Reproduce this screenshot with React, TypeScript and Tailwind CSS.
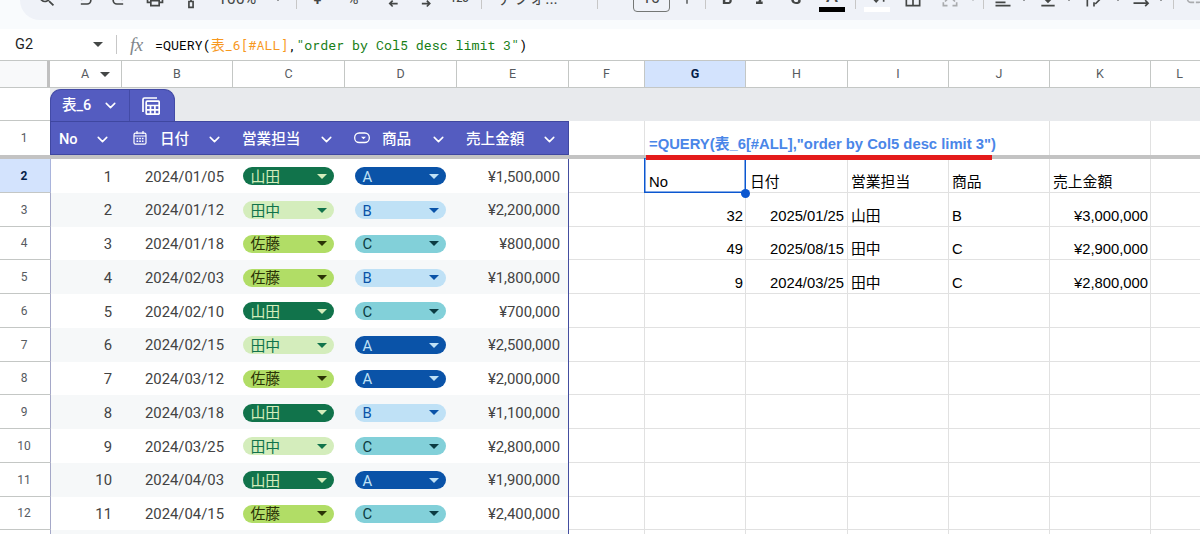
import type { ReactNode } from 'react'
import { clsx } from 'clsx'
import { ChevronDown } from 'lucide-react'
import {
    MdSearch,
    MdOutlinePrint,
    MdFormatBold,
    MdFormatItalic,
    MdStrikethroughS,
    MdBorderAll,
    MdFormatAlignLeft,
    MdVerticalAlignBottom,
    MdArrowDropDown,
    MdAdd,
    MdLink,
} from 'react-icons/md'

interface SalesRow {
    no: number
    date: string
    staff: string
    item: string
    amount: string
}

const SALES: SalesRow[] = [
    { no: 1, date: '2024/01/05', staff: '山田', item: 'A', amount: '¥1,500,000' },
    { no: 2, date: '2024/01/12', staff: '田中', item: 'B', amount: '¥2,200,000' },
    { no: 3, date: '2024/01/18', staff: '佐藤', item: 'C', amount: '¥800,000' },
    { no: 4, date: '2024/02/03', staff: '佐藤', item: 'B', amount: '¥1,800,000' },
    { no: 5, date: '2024/02/10', staff: '山田', item: 'C', amount: '¥700,000' },
    { no: 6, date: '2024/02/15', staff: '田中', item: 'A', amount: '¥2,500,000' },
    { no: 7, date: '2024/03/12', staff: '佐藤', item: 'A', amount: '¥2,000,000' },
    { no: 8, date: '2024/03/18', staff: '山田', item: 'B', amount: '¥1,100,000' },
    { no: 9, date: '2024/03/25', staff: '田中', item: 'C', amount: '¥2,800,000' },
    { no: 10, date: '2024/04/03', staff: '山田', item: 'A', amount: '¥1,900,000' },
    { no: 11, date: '2024/04/15', staff: '佐藤', item: 'C', amount: '¥2,400,000' },
]

// Query output, G2:K5
const RESULTS: string[][] = [
    ['No', '日付', '営業担当', '商品', '売上金額'],
    ['32', '2025/01/25', '山田', 'B', '¥3,000,000'],
    ['49', '2025/08/15', '田中', 'C', '¥2,900,000'],
    ['9', '2024/03/25', '田中', 'C', '¥2,800,000'],
]

const COLUMNS = [
    { name: 'A', width: 'w-[72px]' },
    { name: 'B', width: 'w-[111px]' },
    { name: 'C', width: 'w-[112px]' },
    { name: 'D', width: 'w-[112px]' },
    { name: 'E', width: 'w-[112px]' },
    { name: 'F', width: 'w-[76px]' },
    { name: 'G', width: 'w-[101px]' },
    { name: 'H', width: 'w-[102px]' },
    { name: 'I', width: 'w-[101px]' },
    { name: 'J', width: 'w-[101px]' },
    { name: 'K', width: 'w-[101px]' },
    { name: 'L', width: 'w-[58px]' },
]

const CHIP_COLORS: Record<string, string> = {
    山田: 'bg-[#11734b] text-[#d4edbc]',
    田中: 'bg-[#d4edbc] text-[#11734b]',
    佐藤: 'bg-[#b1dd66] text-[#2b3306]',
    A: 'bg-[#0a53a8] text-[#bfe1f6]',
    B: 'bg-[#bfe1f6] text-[#0a53a8]',
    C: 'bg-[#82d0d9] text-[#0b3b42]',
}

const ROBOTO = "font-[Roboto,'Noto_Sans_CJK_JP',sans-serif]"
const ARIAL = "font-['Liberation_Sans','Noto_Sans_CJK_JP',sans-serif]"

function Caret({ className }: { className?: string }) {
    return (
        <svg viewBox="0 0 10 5" className={clsx('h-[5px] w-[10px] shrink-0 fill-current', className)}>
            <path d="M0 0h10L5 5z" />
        </svg>
    )
}

function Chip({ value }: { value: string }) {
    return (
        <div className={clsx('flex h-[18px] w-[91px] items-center justify-between rounded-full pl-[7.5px] pr-[7px] leading-none', CHIP_COLORS[value])}>
            <span className="pt-[2px]">{value}</span>
            <Caret />
        </div>
    )
}

function Tool({ width, children }: { width: string; children?: ReactNode }) {
    return <div className={clsx('flex h-full shrink-0 items-center justify-center', width)}>{children}</div>
}

function ToolIcon({ path, className }: { path: string; className?: string }) {
    return (
        <svg viewBox="0 0 24 24" className={clsx('size-5 shrink-0', className)} fill="none" stroke="currentColor" strokeWidth="2">
            <path d={path} />
        </svg>
    )
}

function Divider({ width }: { width: string }) {
    return (
        <Tool width={width}>
            <div className="h-5 w-px bg-[#c7c7c7]" />
        </Tool>
    )
}

function Toolbar() {
    return (
        <div className="h-[29px] shrink-0 bg-[#f9fbfd] pl-5">
            <div className="h-5 overflow-hidden rounded-bl-[20px] bg-[#eff2f8]">
                <div className={clsx('-mt-[21px] flex h-10 items-center pl-[8px] text-[20px] text-[#444746]', ROBOTO)}>
                    <Tool width="w-[38px]"><MdSearch /></Tool>
                    <Tool width="w-[38px]"><ToolIcon path="M7 18h7.500a4.500 4.500 0 0 0 0-9H5M9 5L5 9l4 4" /></Tool>
                    <Tool width="w-[29px]"><ToolIcon path="M17 18H9.500a4.500 4.500 0 0 1 0-9H19M15 5l4 4-4 4" /></Tool>
                    <Tool width="w-[43px]"><MdOutlinePrint /></Tool>
                    <Tool width="w-[29px]"><ToolIcon path="M5 3h13v5H5zM18 5h3v6h-9v4M9.500 15h5v7h-5z" /></Tool>
                    <Tool width="w-[64px]"><span className="text-[16px]">100%</span></Tool>
                    <Tool width="w-[18px]"><MdArrowDropDown className="size-4" /></Tool>
                    <Divider width="w-[19px]" />
                    <Tool width="w-[23px]"><span className="text-[16px] font-medium">¥</span></Tool>
                    <Tool width="w-[48px]"><span className="text-[15px]">%</span></Tool>
                    <Tool width="w-[27px]"><ToolIcon path="M3 11h2M8 4h4v8H8zM20 17.500h-9M14 14l-3.500 3.500 3.500 3.500" /></Tool>
                    <Tool width="w-[43px]"><ToolIcon path="M3 11h2M8 4h4v8H8zM15 4h4v8h-4zM7 17.500h9M13 14l3.500 3.500-3.500 3.500" /></Tool>
                    <Tool width="w-[25px]"><span className="text-[11px] font-medium">123</span></Tool>
                    <Divider width="w-[18px]" />
                    <Tool width="w-[75px]"><span className="text-[16px] whitespace-nowrap">デフォ...</span></Tool>
                    <Divider width="w-[65px]" />
                    <Tool width="w-[42px]">
                        <div className="mt-px flex h-[25px] w-[37px] items-center justify-center rounded-[4px] border border-[#747775] text-[16px]">
                            <span className="-mt-[4px]">10</span>
                        </div>
                    </Tool>
                    <Tool width="w-[29px]"><MdAdd className="size-4" /></Tool>
                    <Divider width="w-[9px]" />
                    <Tool width="w-[33px]"><MdFormatBold /></Tool>
                    <Tool width="w-[35px]"><MdFormatItalic /></Tool>
                    <Tool width="w-[36px]"><MdStrikethroughS /></Tool>
                    <Tool width="w-[36px]">
                        <div className="flex flex-col items-center pt-px">
                            <span className="text-[18px] leading-[18px] font-medium">A</span>
                            <div className="mt-[2px] h-[5px] w-[26px] bg-black" />
                        </div>
                    </Tool>
                    <Divider width="w-[10px]" />
                    <Tool width="w-[33px]">
                        <div className="flex flex-col items-center pt-px">
                            <ToolIcon className="-mt-[1px]" path="M5 12l7-7 6 6-7 8zM20 16v3" />
                            <div className="mt-[1px] h-[5px] w-[26px] bg-white" />
                        </div>
                    </Tool>
                    <Tool width="w-[40px]"><MdBorderAll /></Tool>
                    <Tool width="w-[34px]">
                        <ToolIcon className="text-[#a9abae]" path="M4 8V4h5M15 4h5v4M4 16v4h5M15 20h5v-4M2 12h6M16 12h6M6 15l3-3M18 15l-3-3" />
                    </Tool>
                    <Tool width="w-[12px]"><MdArrowDropDown className="size-4 shrink-0 text-[#a9abae]" /></Tool>
                    <Divider width="w-[8px]" />
                    <Tool width="w-[31px]"><MdFormatAlignLeft /></Tool>
                    <Tool width="w-[12px]"><MdArrowDropDown className="size-4 shrink-0" /></Tool>
                    <Tool width="w-[35px]"><MdVerticalAlignBottom /></Tool>
                    <Tool width="w-[8px]"><MdArrowDropDown className="size-4 shrink-0" /></Tool>
                    <Tool width="w-[41px]"><ToolIcon path="M4 3v18M12 3v4M12 16v5M7 12h12M16 9l3.500 3-6 6" /></Tool>
                    <Tool width="w-[8px]"><MdArrowDropDown className="size-4 shrink-0" /></Tool>
                    <Tool width="w-[37px]"><ToolIcon path="M6 11l5-9 5 9M3 17h17M17 13.500l3.500 3.500-3.500 3.500" /></Tool>
                    <Tool width="w-[4px]"><MdArrowDropDown className="size-4 shrink-0" /></Tool>
                    <Divider width="w-[20px]" />
                    <Tool width="w-[24px]"><MdLink className="text-[#a9abae]" /></Tool>
                </div>
            </div>
        </div>
    )
}

function FormulaBar() {
    return (
        <div className="flex h-[32px] shrink-0 items-center border-b border-[#c4c7c5] bg-white">
            <div className={clsx('flex w-[116px] items-center justify-between pl-[15px] pr-[13px] text-[14.5px] text-[#1f1f1f]', ROBOTO)}>
                <span>G2</span>
                <Caret className="w-[9px] text-[#444746]" />
            </div>
            <div className="h-[19px] w-px bg-[#c7c7c7]" />
            <div className="w-[38px] pl-[13px] font-['Liberation_Serif',serif] text-[19px] leading-none tracking-[-0.5px] text-[#80868b] italic">fx</div>
            <div className="font-['Roboto_Mono','Liberation_Mono','Noto_Sans_CJK_JP',monospace] text-[13.28px] whitespace-pre text-black">
                =QUERY(<span className="text-[#f7981d]"><span className="text-[14px]">表</span>_6[#ALL]</span>,
                <span className="text-[#188018]">"order by Col5 desc limit 3"</span>)
            </div>
        </div>
    )
}

function ColumnHeaders() {
    return (
        <div className="flex h-[27px] shrink-0 border-b border-[#c4c7c5]">
            <div className="w-[50px] shrink-0 border-r-[3px] border-[#c0c0c0] bg-[#f8f9fa]" />
            {COLUMNS.map((col) => (
                <div
                    key={col.name}
                    className={clsx(
                        'flex shrink-0 items-center justify-center border-r border-[#c4c7c5] text-[12.5px]',
                        col.width,
                        col.name === 'G' ? 'bg-[#d3e3fd] font-bold text-[#041e49]' : 'text-[#575b5f]',
                    )}
                >
                    {col.name}
                    {col.name === 'A' && <Caret className="-mr-[20px] ml-[11px] w-[9px] text-[#444746]" />}
                </div>
            ))}
        </div>
    )
}

function RowHeader({ label, active }: { label: string; active?: boolean }) {
    return (
        <div
            className={clsx(
                'flex w-[51px] shrink-0 items-center justify-center border-r border-b border-b-[#c4c7c5] pt-px pr-[2px] text-[12px]',
                active ? 'border-r-[#a9b4dc] bg-[#d3e3fd] font-bold text-[#041e49]' : 'border-r-[#a5a8c8] text-[#575b5f]',
            )}
        >
            {label}
        </div>
    )
}

function TableTab() {
    return (
        <div className="flex h-[33px] shrink-0">
            <div className="w-[50px] shrink-0 border-b border-[#c4c7c5]" />
            <div className="flex flex-1 bg-[#e8eaed] pt-px">
                <div className="flex w-[125px] overflow-hidden rounded-t-[11px] border border-b-0 border-[#434ba6] bg-[#545cc0] text-white">
                    <div className="flex w-[79px] items-center border-r border-[#434ba6] pl-[11px] text-[14.5px] font-medium">
                        表_6
                        <ChevronDown className="ml-[11px] size-[17px]" strokeWidth={2.2} />
                    </div>
                    <div className="flex flex-1 items-center pl-[12px]">
                        <svg viewBox="0 0 18 18" className="size-[18px]" fill="none" stroke="currentColor" strokeWidth="1.700">
                            <path d="M1 15V2.500A1.500 1.500 0 0 1 2.500 1H15" />
                            <rect x="4.200" y="4.200" width="13" height="13" rx="1" />
                            <path d="M4.200 8.500h13M4.200 12.800h13M8.500 8.500v8.700M12.900 8.500v8.700" />
                        </svg>
                    </div>
                </div>
            </div>
        </div>
    )
}

function HeadCell({ width, label, icon }: { width: string; label: string; icon?: ReactNode }) {
    return (
        <div className={clsx('flex shrink-0 items-center pr-[11px] pl-[8px]', width)}>
            {icon}
            <span className="flex-1 pt-px whitespace-nowrap">{label}</span>
            <ChevronDown className="size-[17px] shrink-0" strokeWidth={2.2} />
        </div>
    )
}

function HeaderRow() {
    return (
        <div className="flex h-[34px] shrink-0">
            <div className="flex w-[50px] shrink-0 items-center justify-center pr-[2px] text-[12px] text-[#575b5f]">1</div>
            <div className="flex w-[519px] shrink-0 border border-[#3f47a0] bg-[#545cc0] pt-[2px] text-[14.6px] font-medium text-white">
                <HeadCell width="w-[71px]" label="No" />
                <HeadCell
                    width="w-[112px]"
                    label="日付"
                    icon={
                        <svg viewBox="0 0 14 14" className="-mt-[3px] mr-[13px] ml-[3px] size-[14px] shrink-0" fill="none" stroke="currentColor" strokeWidth="1.200">
                            <rect x="1" y="2.200" width="12" height="11" rx="1.500" />
                            <path d="M4 0v3M10 0v3M1 5h12" />
                            <path d="M3.500 7.500h7M3.500 10.300h7" strokeWidth="1.500" strokeDasharray="1.700 1" />
                        </svg>
                    }
                />
                <HeadCell width="w-[112px]" label="営業担当" />
                <HeadCell
                    width="w-[112px]"
                    label="商品"
                    icon={
                        <svg viewBox="0 0 16 12" className="-mt-[3px] mr-[12px] h-3 w-4 shrink-0" fill="none" stroke="currentColor" strokeWidth="1.300">
                            <rect x="0.700" y="1" width="14.600" height="9.500" rx="4.500" />
                            <path d="M7 4.800h5L9.500 7.300z" fill="currentColor" stroke="none" />
                        </svg>
                    }
                />
                <HeadCell width="w-[111px]" label="売上金額" />
            </div>
            <div className="w-[76px] shrink-0 border-r border-[#e1e1e1]" />
            <div className={clsx('flex w-[405px] shrink-0 items-end border-r border-[#e1e1e1] pb-[1px] pl-[4px] text-[14.8px] leading-[20px] font-bold whitespace-nowrap text-[#4a86e8]', ARIAL)}>
                =QUERY(表_6[#ALL],"order by Col5 desc limit 3")
            </div>
            <div className="w-[101px] shrink-0 border-r border-[#e1e1e1]" />
        </div>
    )
}

function FreezeBar() {
    return (
        <div className="relative h-1 shrink-0 bg-[#c3c3c3]">
            <div className="absolute top-0 left-[646px] z-10 h-[5px] w-[346px] bg-[#e41b1b]" />
        </div>
    )
}

function DataRow({ row, index }: { row: SalesRow; index: number }) {
    const result = RESULTS[index]

    return (
        <div className="flex h-[33.75px] shrink-0">
            <RowHeader label={String(index + 2)} active={index === 0} />
            <div
                className={clsx(
                    'flex w-[518px] shrink-0 items-center border-r border-[#444ea0] pt-px text-[14.85px] text-[#434343]',
                    index % 2 === 1 && 'bg-[#f6f8f9]',
                )}
            >
                <div className="w-[61px] pt-px text-right">{row.no}</div>
                <div className="w-[112px] pt-px text-right">{row.date}</div>
                <div className="w-[112px] pl-[19px]"><Chip value={row.staff} /></div>
                <div className="w-[112px] pl-[19px]"><Chip value={row.item} /></div>
                <div className="flex-1 pt-px pr-[8px] text-right">{row.amount}</div>
            </div>
            {COLUMNS.slice(5).map((col, i) => {
                const text = result && i > 0 ? result[i - 1] : undefined
                return (
                    <div
                        key={col.name}
                        className={clsx(
                            'relative flex shrink-0 items-end border-r border-b border-[#e1e1e1] text-[14.8px] leading-[20px] whitespace-nowrap text-black',
                            ARIAL,
                            col.width,
                            col.name === 'G' || col.name === 'H' ? 'pl-[4px]' : 'pl-[3px]',
                            col.name === 'H' ? 'pr-[3px]' : 'pr-[2px]',
                            text && /^[¥\d]/.test(text) && 'justify-end',
                        )}
                    >
                        {text}
                        {index === 0 && col.name === 'G' && (
                            <>
                                <div className="absolute inset-y-[-1px] right-[-1px] left-[-1px] border-[1.5px] border-t-0 border-[#0b57d0] shadow-[inset_0_0_0_0.5px_#0b57d0]" />
                                <div className="absolute -right-[5px] -bottom-[6px] z-10 size-[9px] rounded-full bg-[#0b57d0]" />
                            </>
                        )}
                    </div>
                )
            })}
        </div>
    )
}

export default function App() {
    return (
        <div className={clsx('flex h-[534px] w-[1200px] flex-col overflow-hidden bg-white', ROBOTO)}>
            <Toolbar />
            <FormulaBar />
            <ColumnHeaders />
            <TableTab />
            <HeaderRow />
            <FreezeBar />
            {SALES.map((row, index) => (
                <DataRow key={row.no} row={row} index={index} />
            ))}
            <div className="flex h-[34px] shrink-0">
                <RowHeader label="" />
                <div className="w-[518px] shrink-0 border-r border-[#444ea0] bg-[#f6f8f9]" />
                {COLUMNS.slice(5).map((col) => (
                    <div key={col.name} className={clsx('shrink-0 border-r border-[#e1e1e1]', col.width)} />
                ))}
            </div>
        </div>
    )
}
